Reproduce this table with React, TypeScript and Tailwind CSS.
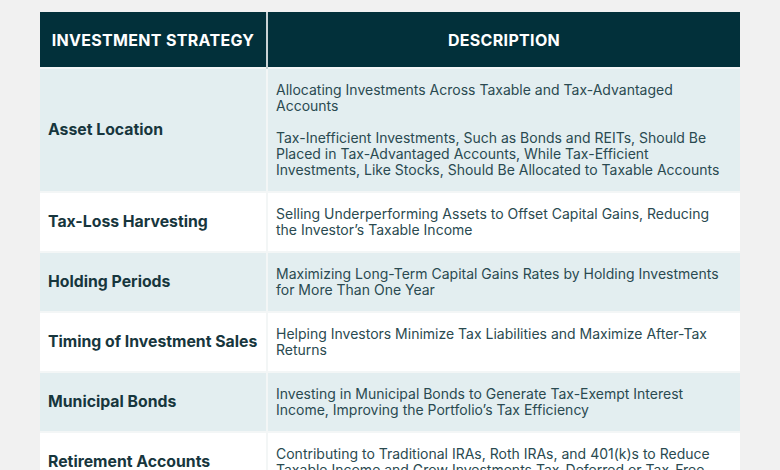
import React from 'react';

interface Strategy {
  name: string;
  desc: string[];
}

const strategies: Strategy[] = [
  {
    name: 'Asset Location',
    desc: [
      'Allocating Investments Across Taxable and Tax-Advantaged Accounts',
      'Tax-Inefficient Investments, Such as Bonds and REITs, Should Be Placed in Tax-Advantaged Accounts, While Tax-Efficient Investments, Like Stocks, Should Be Allocated to Taxable Accounts',
    ],
  },
  {
    name: 'Tax-Loss Harvesting',
    desc: ['Selling Underperforming Assets to Offset Capital Gains, Reducing the Investor’s Taxable Income'],
  },
  {
    name: 'Holding Periods',
    desc: ['Maximizing Long-Term Capital Gains Rates by Holding Investments for More Than One Year'],
  },
  {
    name: 'Timing of Investment Sales',
    desc: ['Helping Investors Minimize Tax Liabilities and Maximize After-Tax Returns'],
  },
  {
    name: 'Municipal Bonds',
    desc: ['Investing in Municipal Bonds to Generate Tax-Exempt Interest Income, Improving the Portfolio’s Tax Efficiency'],
  },
  {
    name: 'Retirement Accounts',
    desc: ['Contributing to Traditional IRAs, Roth IRAs, and 401(k)s to Reduce Taxable Income and Grow Investments Tax-Deferred or Tax-Free'],
  },
];

const App: React.FC = () => {
  return (
    <div className="h-[470px] overflow-hidden bg-[#f1f1f1] pt-3 px-10 font-['Inter',sans-serif]">
      <table className="w-[700px] border-collapse">
        <thead>
          <tr className="bg-[#02303a] text-white">
            <th className="w-[227px] h-[56px] border-r-2 border-[#c9d3d5] text-[16px] font-bold tracking-[0.02em]">
              INVESTMENT STRATEGY
            </th>
            <th className="h-[56px] text-[16px] font-bold tracking-[0.02em]">DESCRIPTION</th>
          </tr>
        </thead>
        <tbody>
          {strategies.map((s, i) => (
            <tr
              key={s.name}
              className={`${i % 2 === 0 ? 'bg-[#e3eef0]' : 'bg-white'} border-t-2 border-[#f3f6f6]`}
            >
              <td className="px-2 text-left text-[15.8px] font-bold text-[#17363d] border-r-2 border-[#f3f6f6]">
                {s.name}
              </td>
              <td className="pl-2 pr-[14px] py-[13px] text-[14px] leading-4 text-[#2a4a50]">
                {s.desc.map((d, j) => (
                  <p key={j} className={j > 0 ? 'mt-[16px]' : ''}>
                    {d}
                  </p>
                ))}
              </td>
            </tr>
          ))}
        </tbody>
      </table>
    </div>
  );
};

export default App;
